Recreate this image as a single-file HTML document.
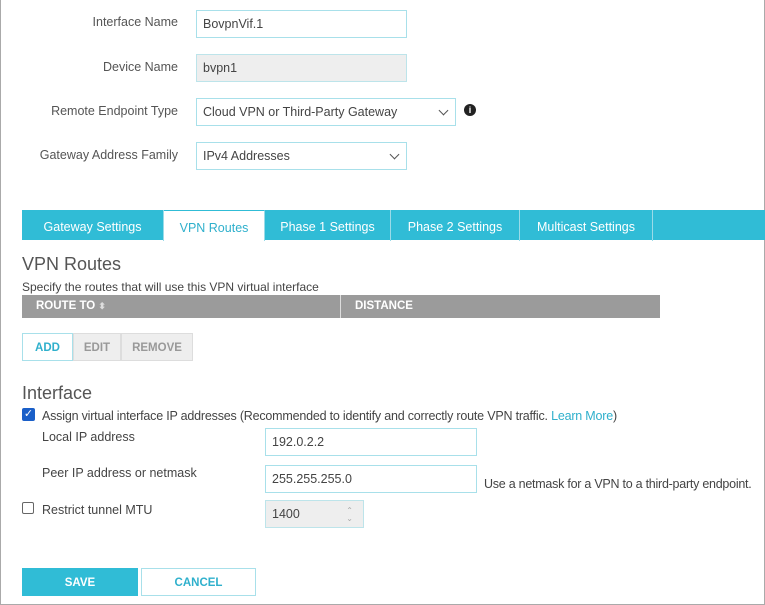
<!DOCTYPE html>
<html><head><style>
*{box-sizing:border-box;margin:0;padding:0}
body{width:765px;height:605px;background:#fff;font-family:"Liberation Sans",sans-serif;color:#444;position:relative;overflow:hidden}
.frame{position:absolute;left:0;top:0;width:765px;height:605px;border:1px solid #aaa;border-top:none}
.a{position:absolute}
.lbl{font-size:12.5px;color:#555;text-align:right;width:178px;left:0}
.inp{border:1px solid #a8e0ea;background:#fff;font-size:12.5px;color:#444;padding-left:6px;display:flex;align-items:center;height:28px}
.tab{position:absolute;top:210px;height:31px;padding-top:3px;color:#fff;font-size:12.5px;display:flex;align-items:center;justify-content:center;border-right:1px solid #9adbe8}
.chev{position:absolute;right:8px;top:8px;width:7px;height:7px;border-right:1.3px solid #555;border-bottom:1.3px solid #555;transform:rotate(45deg)}
.btn{position:absolute;top:333px;height:28px;font-size:11.5px;font-weight:bold;display:flex;align-items:center;justify-content:center;padding-top:2px}
</style></head><body>
<div class="frame"></div>
<div class="a lbl" style="top:15px">Interface Name</div>
<div class="a inp" style="left:196px;top:10px;width:211px">BovpnVif.1</div>
<div class="a lbl" style="top:60px">Device Name</div>
<div class="a inp" style="left:196px;top:54px;width:211px;background:#eee;border-color:#bde4ea">bvpn1</div>
<div class="a lbl" style="top:104px">Remote Endpoint Type</div>
<div class="a inp" style="left:196px;top:98px;width:260px">Cloud VPN or Third-Party Gateway<span class="chev"></span></div>
<div class="a" style="left:464px;top:104px;width:12px;height:12px;border-radius:50%;background:#222;color:#fff;font-size:9px;font-weight:bold;text-align:center;line-height:12px">i</div>
<div class="a lbl" style="top:148px">Gateway Address Family</div>
<div class="a inp" style="left:196px;top:142px;width:211px">IPv4 Addresses<span class="chev"></span></div>

<div class="a" style="left:22px;top:210px;width:743px;height:30px;background:#30bcd6"></div>
<div class="tab" style="left:22px;width:142px">Gateway Settings</div>
<div class="tab" style="left:164px;width:101px;background:#fff;color:#2fb0cc;border-top:1px solid #30bcd6">VPN Routes</div>
<div class="tab" style="left:265px;width:126px">Phase 1 Settings</div>
<div class="tab" style="left:391px;width:129px">Phase 2 Settings</div>
<div class="tab" style="left:520px;width:133px">Multicast Settings</div>

<div class="a" style="left:22px;top:254px;font-size:18px;color:#555">VPN Routes</div>
<div class="a" style="left:22px;top:280px;font-size:12px;color:#444">Specify the routes that will use this VPN virtual interface</div>
<div class="a" style="left:22px;top:295px;width:638px;height:23px;background:#9b9b9b"></div>
<div class="a" style="left:340px;top:295px;width:1px;height:23px;background:#ddd"></div>
<div class="a" style="left:36px;top:300px;font-size:11.5px;font-weight:bold;color:#fff">ROUTE TO <span style="font-size:9px;color:#ddd">⬍</span></div>
<div class="a" style="left:355px;top:300px;font-size:11.5px;font-weight:bold;color:#fff">DISTANCE</div>
<div class="btn" style="left:22px;width:51px;border:1px solid #a8e0ea;color:#2fb0cc;background:#fff">ADD</div>
<div class="btn" style="left:73px;width:48px;background:#eee;border:1px solid #ddd;color:#999">EDIT</div>
<div class="btn" style="left:121px;width:72px;background:#eee;border:1px solid #ddd;color:#999">REMOVE</div>

<div class="a" style="left:22px;top:383px;font-size:18px;color:#555">Interface</div>
<div class="a" style="left:22px;top:408px;width:13px;height:13px;border-radius:2px;background:#1a5fc8;color:#fff;font-size:11px;line-height:13px;text-align:center">✓</div>
<div class="a" style="left:42px;top:409px;font-size:12.5px;letter-spacing:-0.2px">Assign virtual interface IP addresses (Recommended to identify and correctly route VPN traffic. <span style="color:#2fb0cc">Learn More</span>)</div>
<div class="a" style="left:42px;top:430px;font-size:12.5px">Local IP address</div>
<div class="a inp" style="left:265px;top:428px;width:212px">192.0.2.2</div>
<div class="a" style="left:42px;top:466px;font-size:12.5px">Peer IP address or netmask</div>
<div class="a inp" style="left:265px;top:465px;width:212px">255.255.255.0</div>
<div class="a" style="left:484px;top:477px;font-size:12.5px;letter-spacing:-0.25px">Use a netmask for a VPN to a third-party endpoint.</div>
<div class="a" style="left:22px;top:502px;width:12px;height:12px;border:1.3px solid #666;border-radius:2px"></div>
<div class="a" style="left:42px;top:503px;font-size:12.5px">Restrict tunnel MTU</div>
<div class="a inp" style="left:265px;top:500px;width:99px;background:#eee;border-color:#bde4ea">1400<span class="a" style="right:10px;top:6px;font-size:8px;color:#aaa;line-height:8px">⌃<br>⌄</span></div>

<div class="btn" style="left:22px;top:568px;width:116px;height:28px;background:#30bcd6;color:#fff">SAVE</div>
<div class="btn" style="left:141px;top:568px;width:115px;height:28px;border:1px solid #a8e0ea;color:#2fb0cc">CANCEL</div>
</body></html>
